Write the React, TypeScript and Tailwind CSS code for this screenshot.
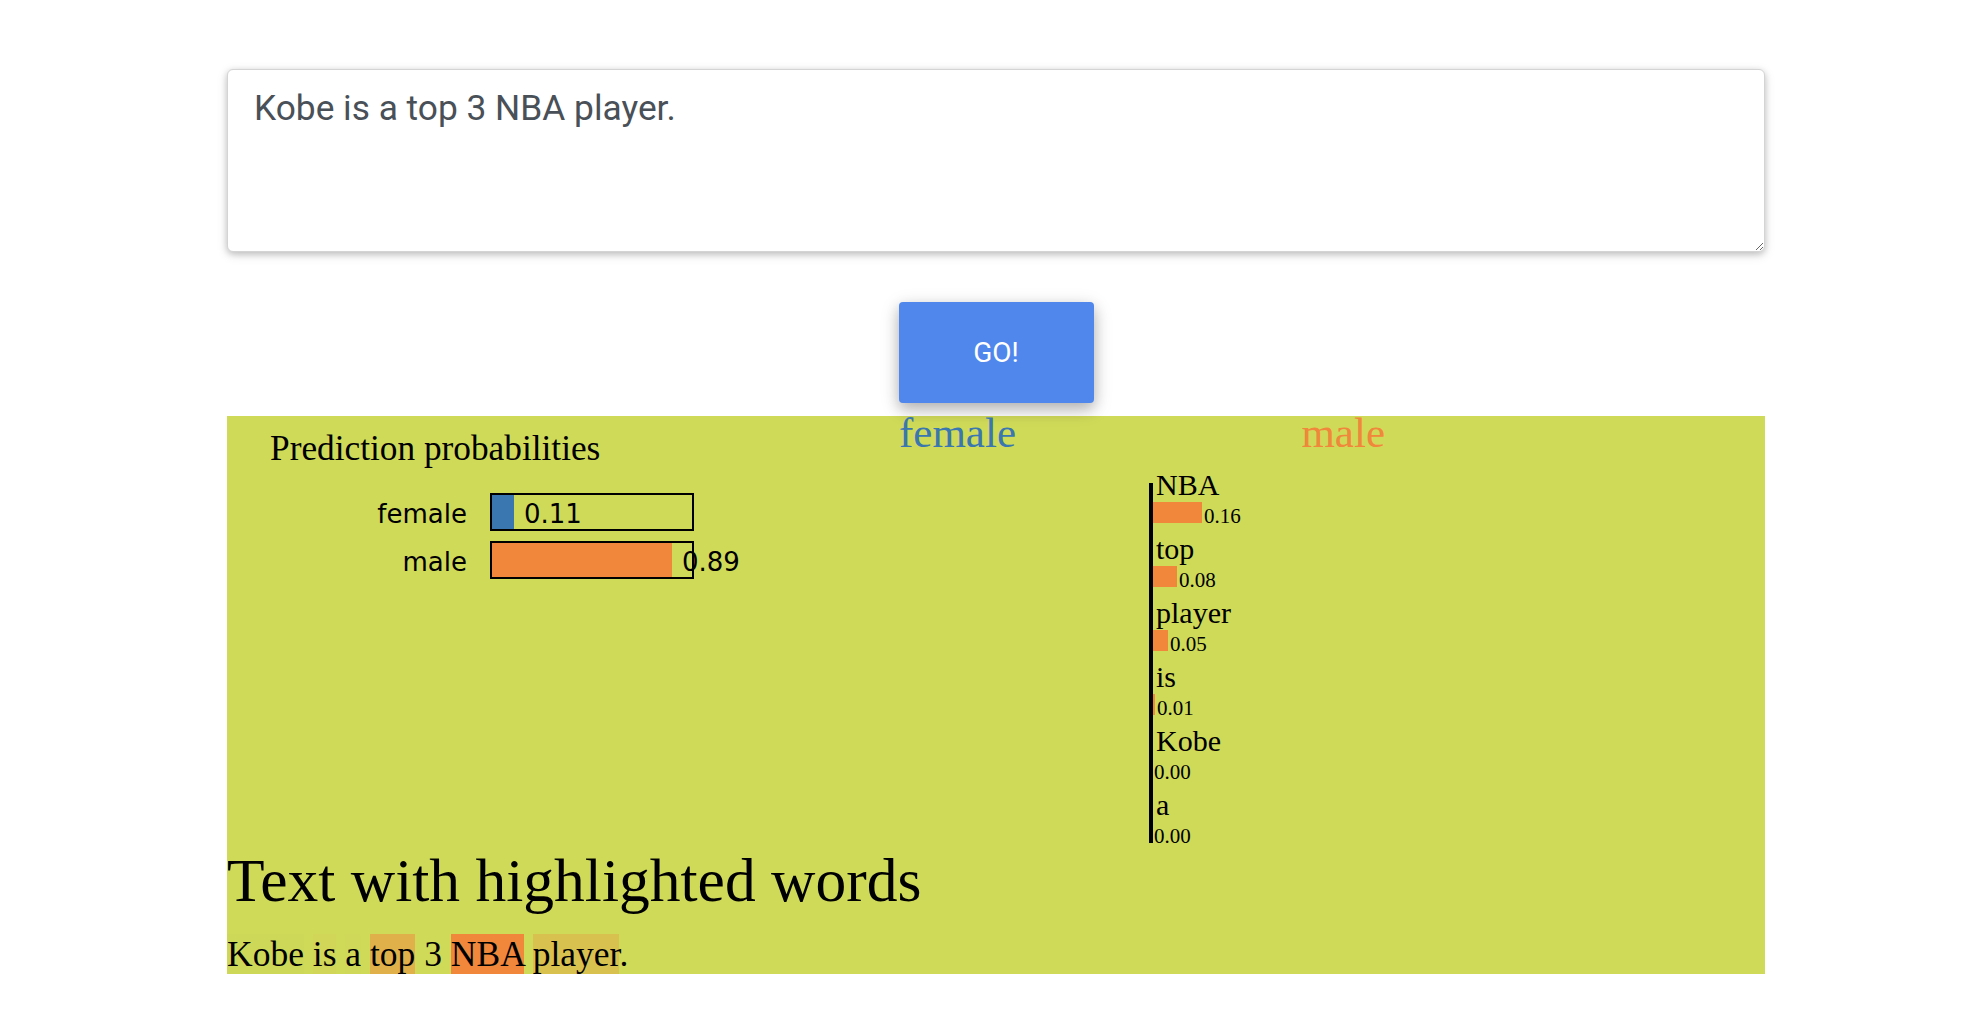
import React from 'react';

const serif = '"Liberation Serif", "Times New Roman", serif';
const sans = '"DejaVu Sans", Verdana, sans-serif';

const ORANGE = '#f1873a';
const BLUE = '#3a76b0';

const probs = [
  { name: 'female', value: '0.11', width: 24, color: BLUE },
  { name: 'male', value: '0.89', width: 182, color: ORANGE },
];

const features = [
  { name: 'NBA', value: '0.16', width: 50 },
  { name: 'top', value: '0.08', width: 25 },
  { name: 'player', value: '0.05', width: 16 },
  { name: 'is', value: '0.01', width: 3 },
  { name: 'Kobe', value: '0.00', width: 0 },
  { name: 'a', value: '0.00', width: 0 },
];

const PredictProba = () => (
  <svg width={653} height={430} className="shrink-0 overflow-visible">
    <text x={43} y={44} fontFamily={serif} fontSize={35.3} fill="#000">
      Prediction probabilities
    </text>
    {probs.map((p, i) => {
      const top = 77 + i * 48;
      return (
        <g key={p.name}>
          <text x={240} y={top + 30} textAnchor="end" fontFamily={sans} fontSize={26} fill="#000">
            {p.name}
          </text>
          <rect x={263} y={top} width={p.width} height={38} fill={p.color} />
          <rect x={264} y={top + 1} width={202} height={36} fill="none" stroke="#000" strokeWidth={2} />
          <text x={263 + p.width + 10} y={top + 30} fontFamily={sans} fontSize={26} fill="#000">
            {p.value}
          </text>
        </g>
      );
    })}
  </svg>
);

const Explanation = () => (
  <svg width={540} height={430} className="shrink-0 overflow-visible">
    <text x={19} y={31} fontFamily={serif} fontSize={43} fill={BLUE}>
      female
    </text>
    <text x={505} y={31} textAnchor="end" fontFamily={serif} fontSize={43} fill={ORANGE}>
      male
    </text>
    {features.map((f, i) => {
      const base = 79 + i * 64;
      return (
        <g key={f.name}>
          <text x={276} y={base} fontFamily={serif} fontSize={30} fill="#000">
            {f.name}
          </text>
          {f.width > 0 && <rect x={272} y={base + 7} width={f.width} height={21} fill={ORANGE} />}
          <text x={272 + f.width + 2} y={base + 28} fontFamily={serif} fontSize={21} fill="#000">
            {f.value}
          </text>
        </g>
      );
    })}
    <rect x={269} y={67} width={4} height={360} fill="#000" />
  </svg>
);

export default function App() {
  return (
    <div className="min-h-screen bg-white pt-[69px]">
      <div className="ml-[227px] w-[1538px]">
        <textarea
          defaultValue="Kobe is a top 3 NBA player."
          className="block h-[183px] w-full rounded-[6px] border border-[#d4d4d4] bg-white px-[26px] py-[12px] text-[35.3px] leading-[1.5] text-[#495057] shadow-[0_2px_6px_rgba(0,0,0,0.18),0_3px_12px_rgba(0,0,0,0.12)] outline-none"
          style={{ fontFamily: 'Roboto, "Liberation Sans", sans-serif' }}
        />

        <div className="mt-[50px] flex justify-center">
          <button
            className="h-[101px] w-[195px] rounded-[4px] bg-[#4f87ec] text-[28px] text-white shadow-[0_6px_14px_0_rgba(0,0,0,0.2),0_5px_20px_0_rgba(0,0,0,0.16)]"
            style={{ fontFamily: 'Roboto, "Liberation Sans", sans-serif' }}
          >
            GO!
          </button>
        </div>

        <div className="mt-[13px] bg-[#cfda59] text-black" style={{ fontFamily: serif }}>
          <div className="flex h-[430px]">
            <PredictProba />
            <Explanation />
          </div>
          <h3 className="m-0 text-[61.5px] font-normal leading-[1.12]">Text with highlighted words</h3>
          <div className="mt-[19px] text-[35.5px] leading-[1.13]">
            <span className="bg-[#ced858]">Kobe</span> <span className="bg-[#d1d558]">is</span>{' '}
            <span className="bg-[#cfd858]">a</span> <span className="bg-[#e0b14a]">top</span> 3{' '}
            <span className="bg-[#f1873a]">NBA</span> <span className="bg-[#d9c150]">player</span>.
          </div>
        </div>
      </div>
    </div>
  );
}
